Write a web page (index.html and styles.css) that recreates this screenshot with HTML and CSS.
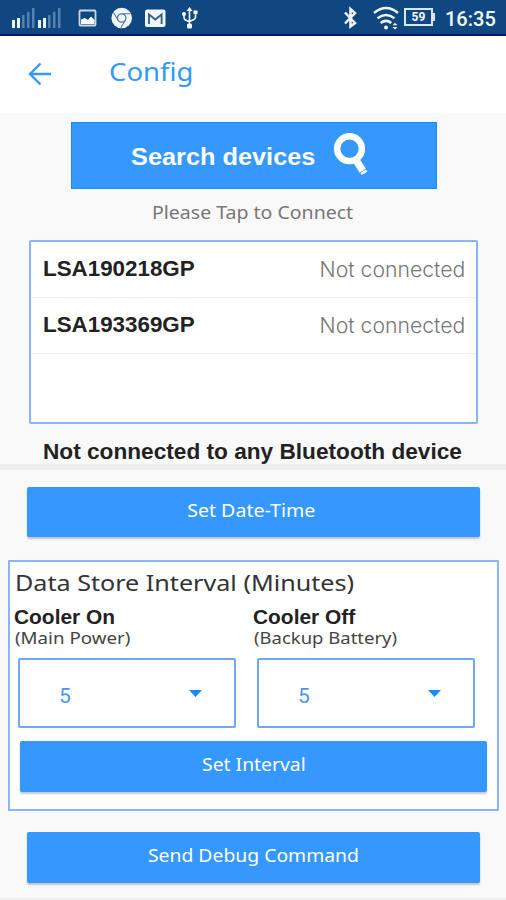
FILE: index.html
```html
<!DOCTYPE html>
<html lang="en">
<head>
<meta charset="utf-8">
<title>Config</title>
<link rel="stylesheet" href="styles.css">
</head>
<body>
<div class="screen">
  <header class="status">
    <svg class="status-left" width="210" height="34" viewBox="0 0 210 34" fill="none">
      <g fill="#eef3fa"><path d="M12 20h3v8h-3zM17 18h3v10h-3zM38 20h3v8h-3zM43 18h3v10h-3z"/></g>
      <g fill="#5580b0"><path d="M22 15h2.500v13H22zM27 12h2.500v16H27zM32 8h2.500v20H32zM48 15h2.500v13H48zM53 12h2.500v16H53zM58 8h2.500v20H58z"/></g>
      <rect x="79.500" y="10.500" width="16" height="15" rx="1" stroke="#c9d8e8" stroke-width="1.800"/>
      <path d="M81 24v-4.500l4-1.500 3 2 3-3.500 3.500 3.500v4z" fill="#fff"/>
      <circle cx="121.700" cy="18" r="10.300" fill="#f2f6fb"/>
      <circle cx="121.700" cy="18" r="4.200" stroke="#51789f" stroke-width="1.300"/>
      <path d="M121.700 13.800h8.500M118 20l-4.700-7.500M125.300 20.300l-4.500 7.500" stroke="#51789f" stroke-width="1.100"/>
      <rect x="145" y="9.500" width="20.500" height="17.500" rx="2" fill="#f2f6fb"/>
      <path d="M149 24V14.500l6.300 5 6.300-5V24" stroke="#33608f" stroke-width="1.900"/>
      <path d="M189.500 10v16M184 14v3.500q0 2 2 2.700l3.500 1.500M195.500 13v4q0 2-2 2.800l-4 1.700" stroke="#f2f6fb" stroke-width="1.600"/>
      <path d="M189.500 7l3 4h-6z" fill="#fff"/><circle cx="184" cy="14" r="2" fill="#fff"/><path d="M193.500 10.500h4V14h-4z" fill="#fff"/><rect x="187" y="23.500" width="5" height="5" rx="1.500" fill="#fff"/>
    </svg>
    <div class="status-right">
      <svg width="56" height="34" viewBox="0 0 56 34" fill="none" stroke="#f0f5fb">
        <path d="M2 12.500l10 10.500-4.500 3.500V9l4.500 4L2 23.500" stroke-width="2.500"/>
        <path d="M31 13q12-10 24 0" stroke-width="2.500"/>
        <path d="M34.500 18.200q8.500-6.500 17 0M37.700 23q5.300-4.200 10.600 0" stroke-width="2.500"/>
        <circle cx="43" cy="27.500" r="2" fill="#f0f5fb" stroke="none"/>
        <path d="M49.500 25.300l2.500-2.500 2.500 2.500zM49.500 27l2.500 2.500 2.500-2.500z" fill="#f0f5fb" stroke="none"/>
      </svg>
      <div class="battery">59</div>
      <div class="clock">16:35</div>
    </div>
  </header>

  <nav class="appbar">
    <svg class="back" width="24" height="24" viewBox="0 0 24 24" fill="none" stroke="#3598fd" stroke-width="2.400"><path d="M23 12H2M12.500 1.500L2 12l10.500 10.500"/></svg>
    <h1 class="title"><span class="t t-title">Config</span></h1>
  </nav>

  <main>
    <button class="search"><span class="t t-search">Search devices</span>
      <svg width="36" height="46" viewBox="0 0 36 46" fill="none" stroke="#fff"><circle cx="16.500" cy="16.700" r="12.400" stroke-width="6.400"/><path d="M23.500 29l6.500 10" stroke-width="7.400"/><path d="M29.500 38l2 3.400" stroke-width="6.600"/><path d="M26.800 41l7-4.500" stroke="#3598fd" stroke-width=".9"/></svg>
    </button>
    <p class="hint"><span class="t t-hint">Please Tap to Connect</span></p>
    <ul class="devices">
      <li><span class="t t-name">LSA190218GP</span><span class="t t-state">Not connected</span></li>
      <li><span class="t t-name">LSA193369GP</span><span class="t t-state">Not connected</span></li>
    </ul>
    <p class="summary"><span class="t t-summary">Not connected to any Bluetooth device</span></p>
    <hr>
    <button class="btn"><span class="t t-date">Set Date-Time</span></button>
    <section class="panel">
      <h2><span class="t t-heading">Data Store Interval (Minutes)</span></h2>
      <div class="fields">
        <div class="field">
          <div class="label"><span class="t t-cooler">Cooler On</span></div>
          <div class="sub"><span class="t t-main">(Main Power)</span></div>
          <div class="select"><span>5</span><i></i></div>
        </div>
        <div class="field">
          <div class="label"><span class="t t-cooler">Cooler Off</span></div>
          <div class="sub"><span class="t t-backup">(Backup Battery)</span></div>
          <div class="select"><span>5</span><i></i></div>
        </div>
      </div>
      <button class="btn inner"><span class="t t-interval">Set Interval</span></button>
    </section>
    <button class="btn debug"><span class="t t-debug">Send Debug Command</span></button>
  </main>
</div>
</body>
</html>
```
FILE: styles.css
```css
* { box-sizing: border-box; margin: 0; padding: 0; }
body { background: #f9f9f9; font-family: "Noto Sans", sans-serif; }
button { border: 0; font: inherit; color: #fff; }
.screen { width: 506px; height: 900px; overflow: hidden; border-bottom: 2px solid #efefef; }
.t { display: inline-block; white-space: nowrap; transform-origin: 0 50%; }

.status { display: flex; justify-content: space-between; height: 36px; background: #0f4880; border-bottom: 2px solid #08156b; }
.status-right { display: flex; color: #f4f8fc; width: 163px; }
.status-right svg { flex: none; }
.battery { position: relative; width: 29px; height: 18px; margin: 8px 0 0 5px; border: 2px solid #dbe6f1; font: bold 12px/15px Roboto, sans-serif; text-align: center; }
.battery::after { content: ""; position: absolute; right: -4px; top: 3px; width: 2px; height: 8px; background: #dbe6f1; }
.clock { margin: 7px 0 0 12px; font: 500 20px/24px Roboto, sans-serif; white-space: nowrap; }

.appbar { display: flex; height: 77px; background: #fff; padding-left: 28px; }
.back { margin-top: 26px; }
.title { margin-left: 56.5px; font-weight: 400; font-size: 25px; line-height: 34px; padding-top: 18px; color: #3598fd; }
.t-title { transform: scaleX(1.1); }

.search { display: flex; align-items: flex-start; width: 366px; height: 67px; margin: 9px 0 0 70.5px; padding-left: 59px; background: #3598fd; border: 1px solid #168cf8; }
.t-search { font: bold 24px/28px "Liberation Sans", sans-serif; margin-top: 20px; width: 202px; text-align: left; transform: scaleX(1.055); }
.search svg { flex: none; margin-top: 9px; }

.hint { height: 51px; padding: 11px 0 0 152px; font-size: 17.5px; line-height: 24px; color: #777; }
.t-hint { transform: scaleX(1.115); }

.devices { list-style: none; width: 449px; height: 184px; margin-left: 29px; background: #fff; border: 2px solid #86b6f9; border-radius: 2px; }
.devices li { display: flex; justify-content: space-between; height: 56px; padding: 0 12px; border-bottom: 1px solid #f0f0f0; line-height: 55px; }
.devices li { padding-right: 11px; }
.t-name { font: bold 21.5px/55px "Liberation Sans", sans-serif; color: #222; transform: scaleX(1.04); }
.t-state { font: 300 21px/55px Inter, sans-serif; color: #777; transform-origin: 100% 50%; transform: scaleX(1.01); }

.summary { height: 40px; padding: 16px 0 0 43px; font: bold 21.5px/24px "Liberation Sans", sans-serif; color: #222; }
.t-summary { transform: scaleX(1.053); }
hr { border: 0; height: 6px; background: #ededed; }

.btn { display: flex; justify-content: center; width: 453px; height: 50px; margin: 17px 0 0 27px; padding-top: 11px; background: #3598fd; border-radius: 2px; box-shadow: 0 2px 2px rgba(0, 0, 0, .22); font-size: 17.5px; line-height: 24px; }
.btn .t { transform-origin: 50% 50%; transform: scaleX(1.105); }
.btn .t-date { margin-right: 4px; transform: scaleX(1.12); }

.panel { width: 491px; height: 251px; margin: 23px 0 0 8px; background: #fff; border: 2px solid #86b6f9; border-radius: 1px; }
.panel h2 { height: 42px; padding: 6px 0 0 4.500px; font-weight: 400; font-size: 22.5px; line-height: 30px; color: #333; }
.t-heading { transform: scaleX(1.117); }
.fields { display: flex; gap: 21px; padding-left: 8px; }
.field { width: 218px; }
.label { height: 24px; padding-top: 1px; margin-left: -4px; font: bold 20.5px/24px "Liberation Sans", sans-serif; color: #222; }
.t-cooler { transform: scaleX(1.02); }
.sub { height: 30px; margin-left: -3.500px; font-size: 16.5px; line-height: 20px; color: #444; }
.t-main { transform: scaleX(1.135); }
.t-backup { transform: scaleX(1.12); }
.select { display: flex; justify-content: space-between; height: 70px; border: 2px solid #6fa8f6; border-radius: 2px; padding: 0 32px 0 39px; font: 21px/73px Roboto, sans-serif; color: #4b97ee; }
.select i { width: 13px; height: 7px; margin-top: 30px; background: #168cf8; clip-path: polygon(0 0, 100% 0, 50% 100%); }
.inner { width: 467px; height: 51px; margin: 13px 0 0 10px; }
.debug { margin-top: 21px; height: 51px; }
```
